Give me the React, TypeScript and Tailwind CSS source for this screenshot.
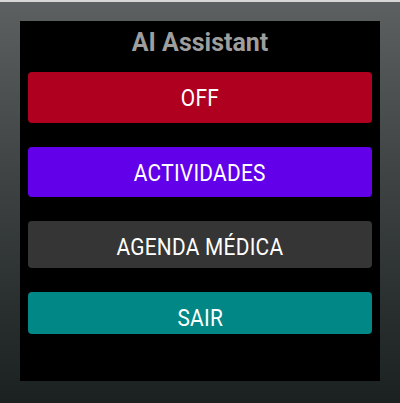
import React from "react";

interface MenuButtonProps {
  label: string;
  className: string;
}

const MenuButton: React.FC<MenuButtonProps> = ({ label, className }) => {
  return (
    <button
      className={
        "w-full rounded-[4px] flex items-start justify-center pt-[14px] text-white text-[24px] leading-none overflow-hidden " +
        className
      }
    >
      <span className="inline-block scale-x-[0.87] tracking-[0.3px]">{label}</span>
    </button>
  );
};

export default function App() {
  return (
    <div
      className="w-[400px] h-[403px] border-t-2 border-[#d6d6d6] bg-gradient-to-b from-[#5c6060] to-[#1b2020] pt-[19px] px-[20px]"
      style={{ fontFamily: "Roboto, 'Liberation Sans', sans-serif" }}
    >
      <div className="h-[360px] bg-black px-[8px]">
        <div className="h-[42px] flex items-center justify-center">
          <h1 className="inline-block scale-x-[0.96] text-[26px] font-bold text-[#9e9e9e]">
            AI Assistant
          </h1>
        </div>
        <div className="flex flex-col gap-[24px] pt-[9px]">
          <MenuButton label="OFF" className="h-[51px] bg-[#b00020]" />
          <MenuButton label="ACTIVIDADES" className="h-[50px] bg-[#6200ea]" />
          <MenuButton label="AGENDA MÉDICA" className="h-[47px] bg-[#353535]" />
          <MenuButton label="SAIR" className="h-[42px] bg-[#018786]" />
        </div>
      </div>
    </div>
  );
}
